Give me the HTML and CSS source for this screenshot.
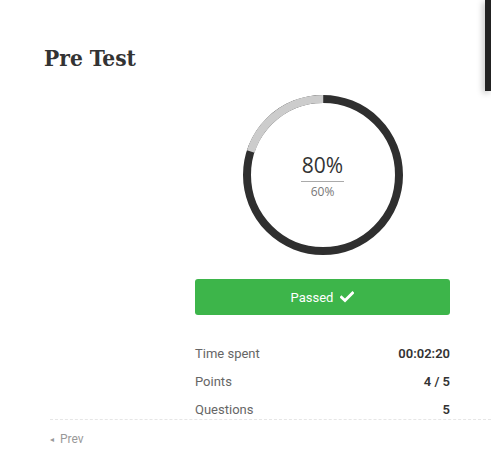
FILE: index.html
```html
<!DOCTYPE html>
<html>
<head>
<meta charset="utf-8">
<link rel="stylesheet" href="styles.css">
</head>
<body>
<div class="side-bar"></div>
<main class="page">
  <h1 class="title">Pre Test</h1>
  <section class="result">
    <div class="chart">
      <svg class="ring" width="160" height="160" viewBox="0 0 160 160">
        <circle cx="80" cy="80" r="76" fill="none" stroke="#2f2f2f" stroke-width="8"/>
        <circle cx="80" cy="80" r="76" fill="none" stroke="#cccccc" stroke-width="8" stroke-dasharray="95.5 400" transform="rotate(-162 80 80)"/>
      </svg>
      <div class="score">
        <div class="score-main">80%</div>
        <div class="score-pass">60%</div>
      </div>
    </div>
    <div class="passed">Passed
      <svg class="check" width="14" height="12" viewBox="0 0 14 12"><path d="M1.5 6.2 L5 9.6 L12.5 2" fill="none" stroke="#fff" stroke-width="2.8" stroke-linecap="square"/></svg>
    </div>
    <ul class="stats">
      <li class="stat"><span class="label">Time spent</span><span class="value">00:02:20</span></li>
      <li class="stat"><span class="label">Points</span><span class="value">4 / 5</span></li>
      <li class="stat"><span class="label">Questions</span><span class="value">5</span></li>
    </ul>
  </section>
  <div class="divider"></div>
  <nav class="nav"><span class="arrow">&#9666;</span>Prev</nav>
</main>
</body>
</html>
```
FILE: styles.css
```css
html, body {
  margin: 0;
  padding: 0;
  background: #fff;
  font-family: Roboto, "Liberation Sans", sans-serif;
  overflow: hidden;
}
.side-bar {
  position: absolute;
  top: 0;
  right: 0;
  width: 6px;
  height: 91px;
  background: #222;
  box-shadow: -2px 2px 6px rgba(0,0,0,0.25);
}
.page {
  padding-left: 44px;
}
.title {
  margin: 0;
  padding-top: 43px;
  font-family: "DejaVu Serif", serif;
  font-stretch: semi-condensed;
  font-weight: bold;
  font-size: 22.5px;
  line-height: 30px;
  color: #333;
}
.result {
  width: 255px;
  margin-left: 151px;
  margin-top: 22px;
  display: flex;
  flex-direction: column;
}
.chart {
  position: relative;
  width: 160px;
  height: 160px;
  align-self: center;
}
.ring {
  display: block;
}
.score {
  position: absolute;
  inset: 0;
  display: flex;
  flex-direction: column;
  align-items: center;
  justify-content: center;
  font-family: "Open Sans", sans-serif;
}
.score-main {
  font-size: 21px;
  line-height: 26px;
  color: #333;
  padding: 0 1px 3px;
  border-bottom: 1px solid #aaa;
  margin-top: 2px;
}
.score-pass {
  font-size: 12px;
  line-height: 18px;
  color: #777;
  margin-top: 1px;
}
.passed {
  margin-top: 24px;
  height: 36px;
  border-radius: 3px;
  background: #3db54a;
  color: #fff;
  font-size: 13px;
  font-weight: 400;
  display: flex;
  align-items: center;
  justify-content: center;
  gap: 7px;
}
.check {
  display: block;
}
.stats {
  list-style: none;
  margin: 25px 0 0;
  padding: 0;
}
.stat {
  display: flex;
  justify-content: space-between;
  height: 28px;
  line-height: 28px;
  font-size: 13px;
}
.label {
  color: #666;
}
.value {
  color: #333;
  font-weight: 600;
}
.divider {
  margin-top: -5px;
  margin-left: 6px;
  border-top: 1px dashed #e6e6e6;
}
.nav {
  margin-top: 11px;
  margin-left: 6px;
  font-size: 12px;
  line-height: 16px;
  color: #999;
}
.arrow {
  font-size: 8px;
  margin-right: 6px;
  vertical-align: 1px;
}
```
